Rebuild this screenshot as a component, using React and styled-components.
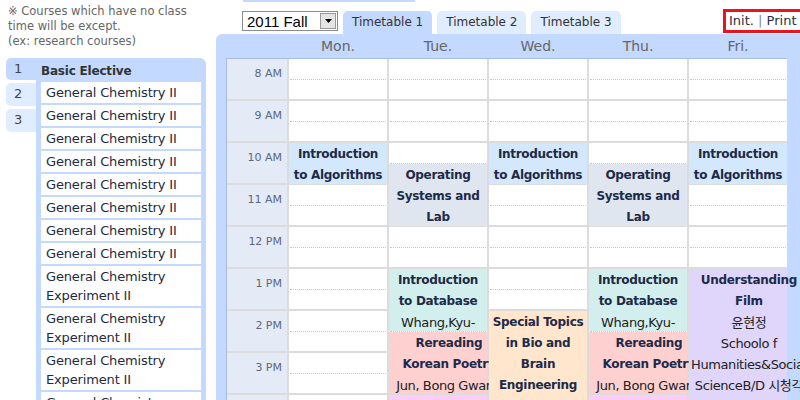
import React from "react";
import styled, { createGlobalStyle } from "styled-components";

const GlobalStyle = createGlobalStyle`
  html, body {
    margin: 0;
    padding: 0;
    background: #fff;
    overflow: hidden;
  }
  body {
    font-family: "DejaVu Sans", "Noto Sans CJK KR", sans-serif;
    color: #222;
  }
`;

const SLOT = 42;
const FIRST_HOUR = 8;

const hours = ["8 AM", "9 AM", "10 AM", "11 AM", "12 PM", "1 PM", "2 PM", "3 PM", "4 PM", "5 PM"];
const days = ["Mon.", "Tue.", "Wed.", "Thu.", "Fri."];

const courses = [
  "General Chemistry II",
  "General Chemistry II",
  "General Chemistry II",
  "General Chemistry II",
  "General Chemistry II",
  "General Chemistry II",
  "General Chemistry II",
  "General Chemistry II",
  "General Chemistry Experiment II",
  "General Chemistry Experiment II",
  "General Chemistry Experiment II",
  "General Chemistry Experiment II",
];

const algo = { start: 10, end: 11, color: "#d3e8fc", title: "Introduction to Algorithms" };
const os = { start: 10.5, end: 12, color: "#dfe6f0", title: "Operating Systems and Lab" };
const db = {
  start: 13,
  end: 14.5,
  color: "#d3efed",
  title: "Introduction to Database",
  prof: "Whang,Kyu-Young",
  room: "E3-1 1501",
};
const poetry = {
  start: 14.5,
  end: 16,
  color: "#ffd0d0",
  title: "Rereading Korean Poetry",
  prof: "Jun, Bong Gwang",
  room: "Schoolo f Humanities&Social ScienceB/D",
};
const late = { start: 16, end: 17.5, color: "#fdcdf8", title: "Writing" };

const week = [
  [algo],
  [os, db, poetry, late],
  [
    algo,
    {
      start: 14,
      end: 17,
      color: "#ffe6cd",
      title: "Special Topics in Bio and Brain Engineering",
    },
  ],
  [os, db, poetry, late],
  [
    algo,
    {
      start: 13,
      end: 17,
      color: "#e0d5fb",
      title: "Understanding Film",
      prof: "윤현정",
      room: "Schoolo f Humanities&Social ScienceB/D 시청각실",
    },
  ],
];

export default function App() {
  return (
    <>
      <GlobalStyle />
      <Page>
        <Side>
          <Note>
            ※ Courses which have no class
            <br />
            time will be except.
            <br />
            (ex: research courses)
          </Note>
          <Catalog>
            <PageTabs>
              {[1, 2, 3].map((n) => (
                <PageTab key={n} $active={n === 1}>
                  {n}
                </PageTab>
              ))}
            </PageTabs>
            <ListPanel>
              <ListTitle>Basic Elective</ListTitle>
              <CourseList>
                {courses.map((c, i) => (
                  <CourseRow key={i}>{c}</CourseRow>
                ))}
              </CourseList>
            </ListPanel>
          </Catalog>
        </Side>

        <Main>
          <Strip />
          <Toolbar>
            <Semester>
              <span>2011 Fall</span>
              <DropButton>
                <svg width="7" height="4" viewBox="0 0 7 4">
                  <path d="M0 0h7L3.5 4z" fill="#000" />
                </svg>
              </DropButton>
            </Semester>
            <Tabs>
              <Tab $active>Timetable 1</Tab>
              <Tab>Timetable 2</Tab>
              <Tab>Timetable 3</Tab>
            </Tabs>
            <Actions>
              Init. <Sep>|</Sep> Print
            </Actions>
          </Toolbar>

          <Board>
            <DayHeads>
              <span />
              {days.map((d) => (
                <DayHead key={d}>{d}</DayHead>
              ))}
            </DayHeads>
            <Grid>
              <TimeColumn>
                {hours.map((h) => (
                  <TimeCell key={h}>{h}</TimeCell>
                ))}
              </TimeColumn>
              {week.map((lectures, di) => (
                <DayColumn key={di}>
                  {hours.map((h) => (
                    <HourCell key={h}>
                      <Half />
                    </HourCell>
                  ))}
                  {lectures.map((l, li) => (
                    <Lecture
                      key={li}
                      $bg={l.color}
                      style={{
                        top: (l.start - FIRST_HOUR) * SLOT,
                        height: (l.end - l.start) * SLOT - 1,
                      }}
                    >
                      <LectureText>
                        <Title>{l.title}</Title>
                        {l.prof && <Info>{l.prof}</Info>}
                        {l.room && <Info>{l.room}</Info>}
                      </LectureText>
                    </Lecture>
                  ))}
                </DayColumn>
              ))}
            </Grid>
          </Board>
        </Main>
      </Page>
    </>
  );
}

const Page = styled.div`
  display: flex;
  gap: 10px;
  padding-left: 6px;
  height: 400px;
  overflow: hidden;
`;

const Side = styled.div`
  width: 200px;
  flex-shrink: 0;
  display: flex;
  flex-direction: column;
`;

const Note = styled.div`
  height: 58px;
  flex-shrink: 0;
  box-sizing: border-box;
  padding: 4px 0 0 2px;
  font-size: 11.5px;
  line-height: 15px;
  color: #666;
`;

const Catalog = styled.div`
  display: flex;
  flex: 1;
`;

const PageTabs = styled.div`
  width: 30px;
  display: flex;
  flex-direction: column;
  gap: 3px;
`;

const PageTab = styled.div`
  height: ${(p) => (p.$active ? "22px" : "23px")};
  padding-left: 8px;
  font-size: 13px;
  line-height: 22px;
  color: #444;
  background: ${(p) => (p.$active ? "#c3d9ff" : "#e0ecff")};
  border-radius: 5px 0 0 5px;
`;

const ListPanel = styled.div`
  width: 170px;
  box-sizing: border-box;
  padding: 0 5px;
  background: #c3d9ff;
  border-radius: 0 6px 0 0;
`;

const ListTitle = styled.div`
  height: 24px;
  box-sizing: border-box;
  padding-top: 6px;
  font-size: 12px;
  font-weight: bold;
  letter-spacing: -0.2px;
  color: #333;
`;

const CourseList = styled.div`
  display: flex;
  flex-direction: column;
  gap: 2px;
`;

const CourseRow = styled.div`
  background: #fff;
  padding: 1px 5px;
  font-size: 13px;
  line-height: 19px;
  letter-spacing: -0.15px;
  color: #1e2a3e;
`;

const Main = styled.div`
  width: 590px;
  flex-shrink: 0;
  display: flex;
  flex-direction: column;
`;

const Strip = styled.div`
  height: 2px;
  flex-shrink: 0;
  width: 172px;
  margin-left: 27px;
  background: #c3d9ff;
`;

const Toolbar = styled.div`
  height: 32px;
  flex-shrink: 0;
  display: flex;
  align-items: flex-end;
`;

const Semester = styled.div`
  width: 96px;
  height: 20px;
  box-sizing: border-box;
  margin: 0 5px 3px 26px;
  border: 1px solid #8c8c8c;
  display: flex;
  align-items: center;
  justify-content: space-between;
  padding-left: 4px;
  font-family: "Liberation Sans", sans-serif;
  font-size: 15px;
  color: #000;
`;

const DropButton = styled.div`
  width: 16px;
  height: 16px;
  margin-right: 1px;
  box-sizing: border-box;
  border: 1px solid #9a9a9a;
  background: #e4e4e4;
  display: flex;
  align-items: center;
  justify-content: center;
`;

const Tabs = styled.div`
  display: flex;
  gap: 5px;
`;

const Tab = styled.div`
  height: 23px;
  padding: 0 9px;
  font-size: 12px;
  line-height: 23px;
  color: #333;
  background: ${(p) => (p.$active ? "#c3d9ff" : "#e0ecff")};
  border-radius: 5px 5px 0 0;
`;

const Actions = styled.div`
  margin: 0 3px 1px auto;
  width: 80px;
  height: 24px;
  box-sizing: border-box;
  border: 3px solid #e8141e;
  padding-left: 3px;
  font-size: 13px;
  line-height: 18px;
  color: #2a2f45;
  white-space: nowrap;
`;

const Sep = styled.span`
  color: #7a86a8;
`;

const Board = styled.div`
  flex: 1;
  background: #c3d9ff;
  border-radius: 6px 0 0 0;
  padding-left: 10px;
`;

const DayHeads = styled.div`
  height: 24px;
  display: grid;
  grid-template-columns: 62px repeat(5, 100px);
`;

const DayHead = styled.div`
  text-align: center;
  font-size: 14px;
  line-height: 24px;
  color: #666;
`;

const Grid = styled.div`
  width: 561px;
  height: 440px;
  box-sizing: border-box;
  border-top: 1px solid #a5bde5;
  border-left: 1px solid #a5bde5;
  display: grid;
  grid-template-columns: 60px repeat(5, 98px);
  column-gap: 2px;
  background: #dcdcdc;
`;

const TimeColumn = styled.div`
  display: flex;
  flex-direction: column;
  gap: 2px;
`;

const TimeCell = styled.div`
  height: 40px;
  flex-shrink: 0;
  box-sizing: border-box;
  padding: 8px 5px 0 0;
  text-align: right;
  font-size: 11px;
  line-height: 14px;
  color: #5c6880;
  background: #e4ebf6;
`;

const DayColumn = styled.div`
  position: relative;
  display: flex;
  flex-direction: column;
  gap: 2px;
`;

const HourCell = styled.div`
  height: 40px;
  flex-shrink: 0;
  background: #fff;
  padding: 0 1px;
`;

const Half = styled.div`
  height: 20px;
  border-bottom: 1px dotted #c8c8c8;
`;

const Lecture = styled.div`
  position: absolute;
  left: 0;
  right: 0;
  background: ${(p) => p.$bg};
`;

const LectureText = styled.div`
  min-width: min-content;
  padding: 1px 2px 0;
  text-align: center;
  line-height: 21px;
  color: #1d2a48;
`;

const Title = styled.div`
  font-size: 12px;
  font-weight: bold;
  letter-spacing: -0.3px;
`;

const Info = styled.div`
  font-size: 13px;
  letter-spacing: -0.4px;
  color: #222;
`;
